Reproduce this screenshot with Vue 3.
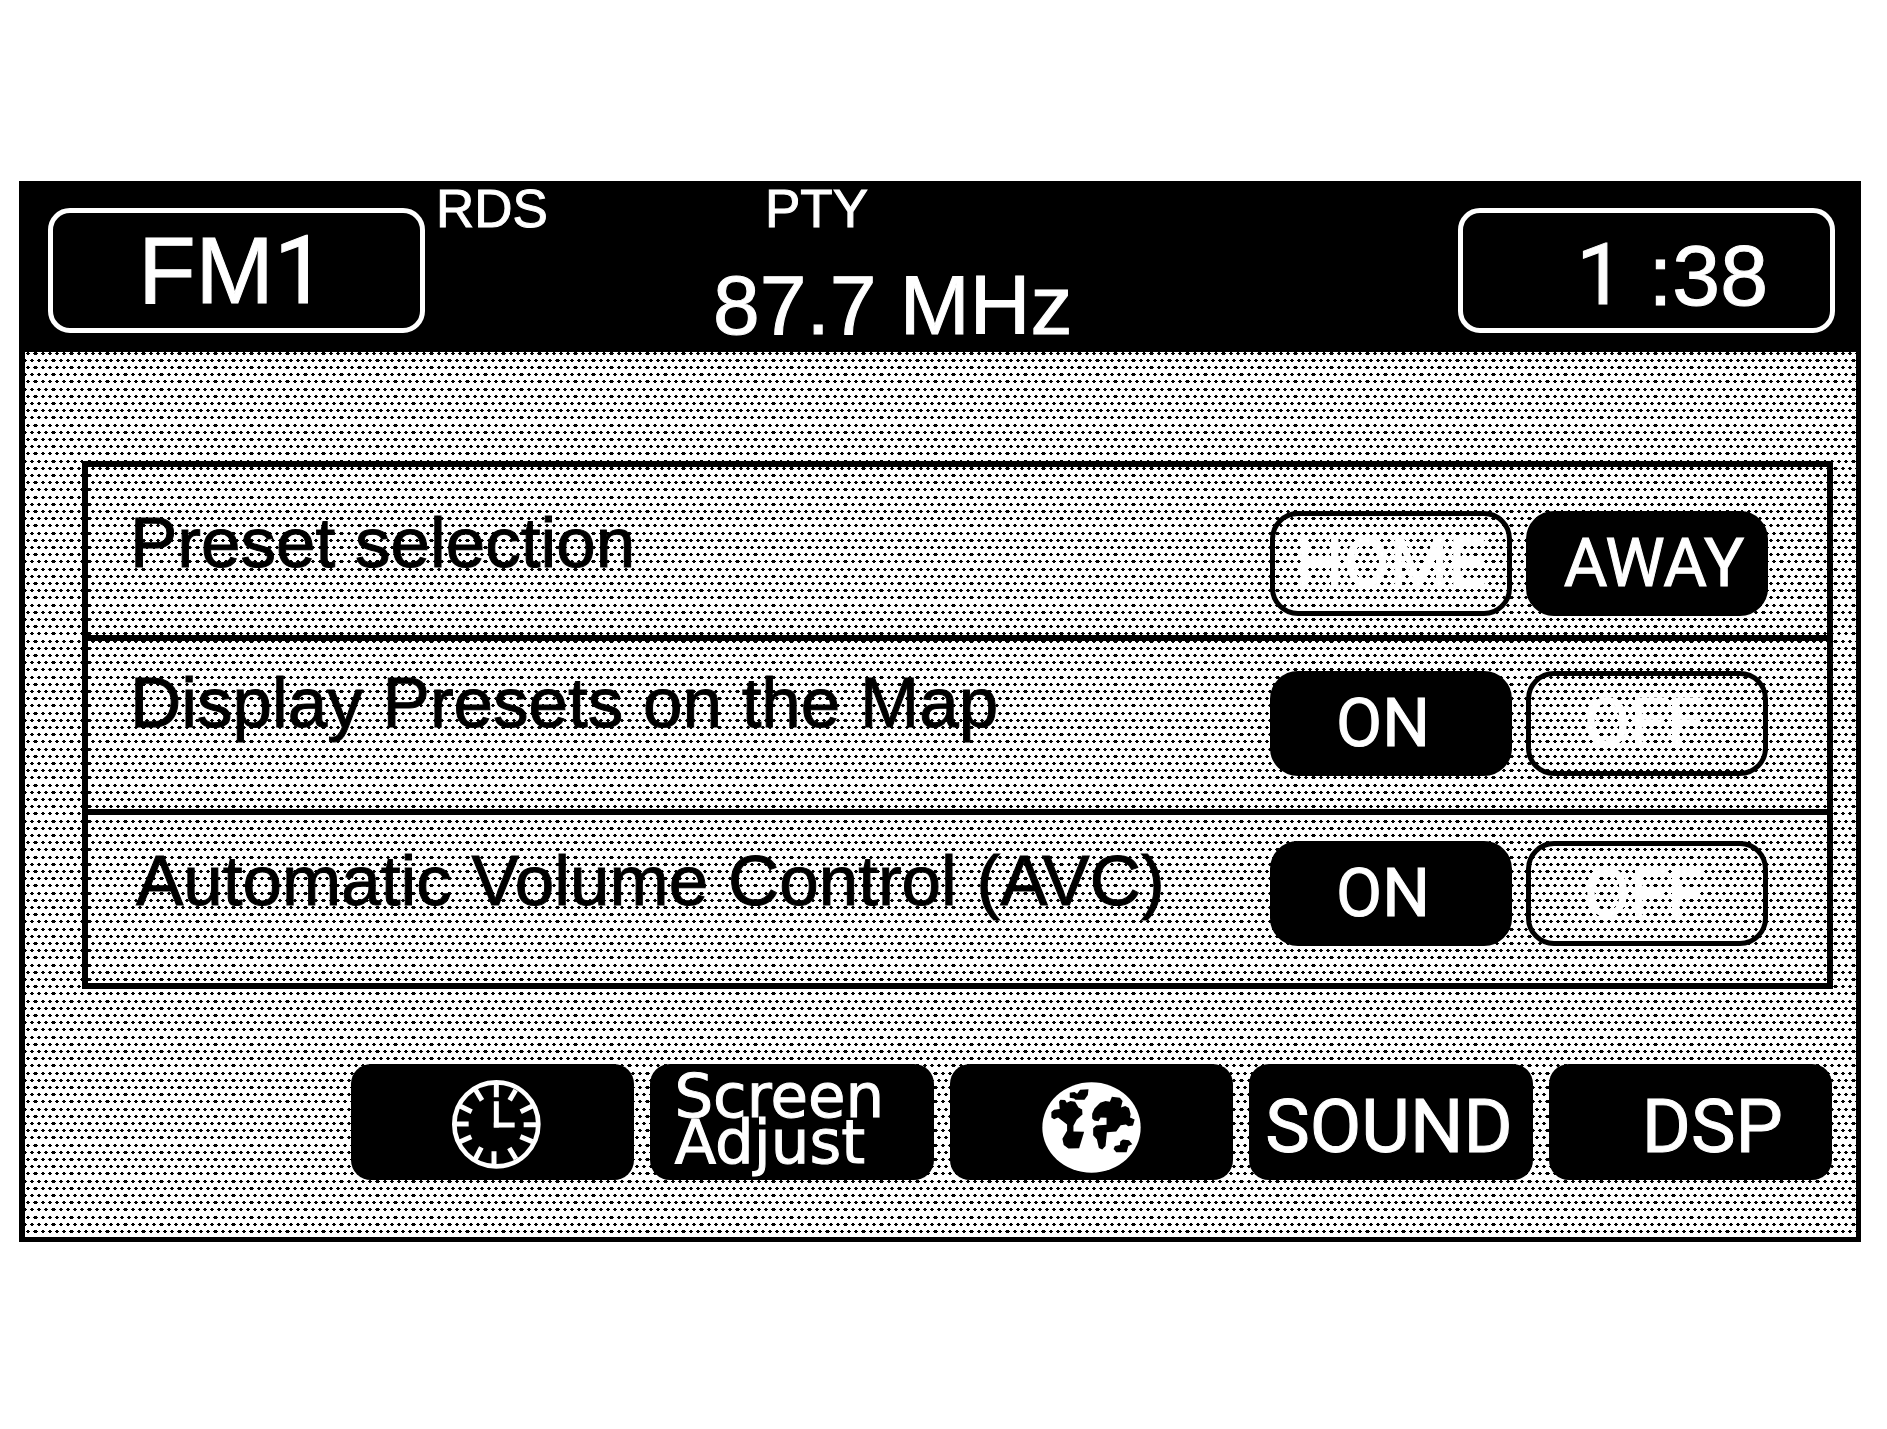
<script setup>
import { reactive } from 'vue'

const rows = reactive([
  { id: 'preset', label: 'Preset selection', options: ['HOME', 'AWAY'], value: 'AWAY' },
  { id: 'map', label: 'Display Presets on the Map', options: ['ON', 'OFF'], value: 'ON' },
  { id: 'avc', label: 'Automatic Volume Control (AVC)', options: ['ON', 'OFF'], value: 'ON' },
])
</script>

<template>
  <main class="screen">
    <header class="top">
      <button type="button" class="frame band">FM<span class="one">1</span></button>
      <div class="station">
        <div class="flags"><span>RDS</span><span>PTY</span></div>
        <div class="freq">87.7 MHz</div>
      </div>
      <div class="frame clock"><span class="one">1</span>&nbsp;:38</div>
    </header>

    <section class="body">
      <div class="panel">
        <div v-for="row in rows" :key="row.id" class="row" :class="row.id">
          <span :id="row.id" class="label">{{ row.label }}</span>
          <div class="options" role="group" :aria-labelledby="row.id">
            <button
              v-for="opt in row.options"
              :key="opt"
              type="button"
              class="option"
              :class="[{ active: row.value === opt }, opt.toLowerCase()]"
              :aria-pressed="row.value === opt"
              @click="row.value = opt"
            >{{ opt }}</button>
          </div>
        </div>
      </div>

      <nav class="keys">
        <button type="button" class="key time" aria-label="Clock">
          <svg width="89" height="89" viewBox="97 119 267 267" fill="none" stroke="#fff">
            <circle cx="230" cy="252" r="126" stroke-width="14" />
            <path
              stroke-width="15"
              d="M230 128V171M223 376V333M104 251H147M356 253H312M168 149L187 180M288 149L270 180M121 197L156 214M338 197L303 214M121 304L155 289M338 304L302 289M167 356L185 321M289 356L269 323"
            />
            <path stroke-width="15" d="M230 183V262M222 254H285" />
          </svg>
        </button>
        <button type="button" class="key adjust">Screen<br />Adjust</button>
        <button type="button" class="key world" aria-label="Map">
          <svg width="99" height="91" viewBox="128 128 296 272">
            <ellipse cx="276" cy="264" rx="147" ry="135" fill="#fff" />
            <path
              d="M211 160L225 158L233 163L242 151L267 150L265 167L255 181H228L224 177L211 175ZM183 181L197 182L202 190L213 185L227 187L237 204L248 210L249 225L232 240L222 259V276L254 277L239 326L207 327L193 316L189 298L203 274V255L176 234L164 239L156 234V218L164 211L181 209L179 187ZM318 185L331 187L337 172L361 175L369 185L364 204L377 200L388 206L393 224L391 234L405 240L400 258L386 260L379 255L363 257L350 276L322 278L318 319L308 330L298 325L292 299L281 287V266L290 258L321 256V235L303 234L297 245L284 243L278 237V223L285 207L302 190ZM370 300L388 302L398 314L386 319L381 338H350L342 328L346 319L361 316L362 306Z"
              fill="#000"
            />
          </svg>
        </button>
        <button type="button" class="key sound">SOUND</button>
        <button type="button" class="key dsp">DSP</button>
      </nav>
    </section>
  </main>
</template>

<style>
body {
  background: #fff;
}
</style>

<style scoped>
.screen {
  margin: 181px 26px 0 19px;
  border: 5px solid #000;
  border-left-width: 6px;
  font-family: "Liberation Sans", Arial, sans-serif;
  color: #000;
  -webkit-text-stroke-width: 1px;
}

button {
  margin: 0;
  font-family: inherit;
  cursor: pointer;
  -webkit-text-stroke-width: inherit;
}

.top {
  display: grid;
  grid-template-columns: 377px 1fr 377px;
  height: 166px;
  padding: 0 21px 0 23px;
  background: #000;
  color: #fff;
}

.frame {
  display: flex;
  align-items: center;
  box-sizing: border-box;
  height: 125px;
  margin-top: 22px;
  border: 5px solid #fff;
  border-radius: 22px;
  background: #000;
  color: #fff;
  line-height: 1;
}

.band {
  justify-content: center;
  padding: 0 8px 0 0;
  font-size: 94px;
}

.clock {
  justify-content: flex-end;
  padding: 8px 62px 0 0;
  font-size: 86px;
}

/* Digit one drawn without a foot serif */
.one {
  font-family: Roboto, sans-serif;
}

.flags {
  display: flex;
  gap: 217px;
  padding-left: 11px;
  font-size: 53px;
  line-height: 46px;
}

.freq {
  margin-top: 31px;
  padding-left: 288px;
  font-size: 84px;
  line-height: 84px;
}

.body {
  padding: 109px 23px 57px 57px;
  background: #fff url("data:image/svg+xml,%3Csvg xmlns='http://www.w3.org/2000/svg' width='36' height='72' shape-rendering='crispEdges'%3E%3Cdefs%3E%3Cpath id='a' d='M8 1h5v1h-5zM9 0h3v3h-3zM16 1h4v1h-4zM17 0h2v3h-2zM23 1h4v1h-4zM24 0h2v3h-2zM30 1h4v1h-4zM31 0h2v3h-2zM1 1h4v1h-4zM2 0h2v3h-2z'/%3E%3Cpath id='b' d='M26 1h5v1h-5zM27 0h3v3h-3zM34 1h2v1h-2zM35 0h1v3h-1zM0 1h2v1h-2zM0 0h1v3h-1zM5 1h4v1h-4zM6 0h2v3h-2zM12 1h4v1h-4zM13 0h2v3h-2zM19 1h4v1h-4zM20 0h2v3h-2z'/%3E%3C/defs%3E%3Cuse href='%23a' y='0'/%3E%3Cuse href='%23b' y='7'/%3E%3Cuse href='%23a' y='14'/%3E%3Cuse href='%23b' y='21'/%3E%3Cuse href='%23a' y='28'/%3E%3Cuse href='%23b' y='36'/%3E%3Cuse href='%23a' y='43'/%3E%3Cuse href='%23b' y='50'/%3E%3Cuse href='%23a' y='57'/%3E%3Cuse href='%23b' y='64'/%3E%3C/svg%3E") 0 0 / 36px 72px;
}

.panel {
  border: 6px solid #000;
}

.row {
  display: flex;
  align-items: flex-start;
  justify-content: space-between;
  box-sizing: border-box;
  height: 168px;
  padding: 40px 59px 0 42px;
}

.row + .row {
  height: 174px;
  border-top: 6px solid #000;
  padding-top: 26px;
}

.label {
  font-size: 71px;
  line-height: 71px;
  white-space: nowrap;
}

.options {
  display: flex;
  gap: 14px;
  margin-top: 4px;
}

.row.avc {
  padding-left: 48px;
}

.avc .label {
  margin-top: 4px;
}

.avc .options {
  margin-top: 0;
}

.option {
  box-sizing: border-box;
  width: 242px;
  height: 105px;
  padding: 0;
  border: 5px solid #000;
  border-radius: 28px;
  background: transparent;
  color: #fff;
  font-family: Roboto, sans-serif;
  font-size: 67px;
  line-height: 1;
}

.option.active {
  background: #000;
}

.option.on {
  padding-right: 16px;
}

.option.off {
  padding-right: 6px;
}

.option.away {
  padding-left: 14px;
}

.keys {
  display: grid;
  grid-template-columns: repeat(5, 1fr);
  gap: 16px;
  margin-top: 75px;
  padding: 0 1px 0 269px;
}

.key {
  display: flex;
  align-items: center;
  justify-content: center;
  height: 116px;
  padding: 0;
  border: 0;
  border-radius: 20px;
  background: #000;
  color: #fff;
  font-family: Roboto, sans-serif;
  font-size: 75px;
  line-height: 1;
}

.time {
  padding: 4px 0 0 8px;
}

.adjust {
  justify-content: flex-start;
  padding: 0 0 6px 24px;
  font-family: "DejaVu Sans", sans-serif;
  font-size: 61px;
  line-height: 46px;
  text-align: left;
}

.world {
  padding-top: 11px;
}

.sound,
.dsp {
  padding-top: 8px;
}

.sound {
  padding-right: 4px;
}

.dsp {
  padding-left: 44px;
}
</style>
